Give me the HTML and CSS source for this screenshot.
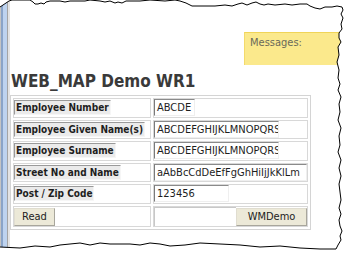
FILE: index.html
```html
<!DOCTYPE html>
<html>
<head>
<meta charset="utf-8">
<link rel="stylesheet" href="styles.css">
</head>
<body>
<div class="page">
  <div class="strip"></div>
  <div class="main">
    <div class="messages">Messages:</div>
    <h1 class="title">WEB_MAP Demo WR1</h1>
    <table class="form">
      <tr>
        <td class="lab"><span class="label">Employee Number</span></td>
        <td class="val"><span class="field short">ABCDE</span></td>
      </tr>
      <tr>
        <td class="lab"><span class="label">Employee Given Name(s)</span></td>
        <td class="val"><span class="field long">ABCDEFGHIJKLMNOPQRS</span></td>
      </tr>
      <tr>
        <td class="lab"><span class="label">Employee Surname</span></td>
        <td class="val"><span class="field long">ABCDEFGHIJKLMNOPQRS</span></td>
      </tr>
      <tr>
        <td class="lab"><span class="label">Street No and Name</span></td>
        <td class="val"><span class="field full">aAbBcCdDeEfFgGhHiIjJkKlLm</span></td>
      </tr>
      <tr>
        <td class="lab"><span class="label">Post / Zip Code</span></td>
        <td class="val"><span class="field mid">123456</span></td>
      </tr>
      <tr class="last">
        <td class="lab"><span class="btn">Read</span></td>
        <td class="val"><div class="btnrow"><span class="blank"></span><span class="btn wide">WMDemo</span></div></td>
      </tr>
    </table>
  </div>
</div>
<svg class="torn" width="357" height="262" viewBox="0 0 357 262">
  <path class="cut" fill-rule="evenodd" d="M0 0H357V262H0Z M0 7 L3 5 L6 3 L9 1 L12 0 L30 0 L33 2 L35 4 L38 4 L41 3 L44 4 L46 2 L50 1 L60 1 L65 2 L70 1 L85 1 L90 0 L100 1 L105 2 L110 1 L115 3 L118 2 L122 3 L126 1 L140 1 L150 0 L165 1 L175 0 L180 1 L186 3 L192 6 L205 6 L215 6 L225 5 L232 6 L238 4 L242 3 L247 5 L252 3 L256 2 L260 4 L264 5 L268 4 L275 5 L285 4 L292 5 L300 4 L307 4 L310 6 L315 8 L320 9 L325 7 L332 7 L337 6 L342 7 L343 10 L341 14 L343 18 L341 24 L342 29 L339 33 L339 38 L341 42 L338 47 L339 55 L337 62 L339 70 L338 78 L340 84 L338 90 L341 97 L339 104 L340 112 L338 120 L341 128 L339 136 L340 145 L338 152 L341 160 L339 168 L341 176 L339 184 L340 192 L341 200 L339 208 L341 214 L339 220 L340 226 L342 231 L340 236 L341 240 L338 245 L336 249 L320 249 L300 248 L280 246 L260 247 L240 245 L220 244 L200 243 L185 245 L170 246 L160 244 L150 243 L140 245 L130 244 L110 244 L100 243 L90 245 L80 243 L70 244 L60 245 L50 247 L35 246 L20 248 L0 247 Z"/>
  <path class="edge" d="M0 7 L3 5 L6 3 L9 1 L12 0 L30 0 L33 2 L35 4 L38 4 L41 3 L44 4 L46 2 L50 1 L60 1 L65 2 L70 1 L85 1 L90 0 L100 1 L105 2 L110 1 L115 3 L118 2 L122 3 L126 1 L140 1 L150 0 L165 1 L175 0 L180 1 L186 3 L192 6 L205 6 L215 6 L225 5 L232 6 L238 4 L242 3 L247 5 L252 3 L256 2 L260 4 L264 5 L268 4 L275 5 L285 4 L292 5 L300 4 L307 4 L310 6 L315 8 L320 9 L325 7 L332 7 L337 6 L342 7 L343 10 L341 14 L343 18 L341 24 L342 29 L339 33 L339 38 L341 42 L338 47 L339 55 L337 62 L339 70 L338 78 L340 84 L338 90 L341 97 L339 104 L340 112 L338 120 L341 128 L339 136 L340 145 L338 152 L341 160 L339 168 L341 176 L339 184 L340 192 L341 200 L339 208 L341 214 L339 220 L340 226 L342 231 L340 236 L341 240 L338 245 L336 249 L320 249 L300 248 L280 246 L260 247 L240 245 L220 244 L200 243 L185 245 L170 246 L160 244 L150 243 L140 245 L130 244 L110 244 L100 243 L90 245 L80 243 L70 244 L60 245 L50 247 L35 246 L20 248 L0 247"/>
</svg>
</body>
</html>
```
FILE: styles.css
```css
html, body {
  margin: 0;
  padding: 0;
  background: #fff;
}
body {
  width: 357px;
  height: 262px;
  overflow: hidden;
  position: relative;
  font-family: "DejaVu Sans", sans-serif;
  font-stretch: condensed;
}
.page {
  display: flex;
  height: 262px;
}
.strip {
  width: 10px;
  flex: none;
  background: linear-gradient(to right, #c4c4c4 0 1px, #8aa4c8 1px 3px, #bed3ef 3px 7px, #a4a4a4 7px 8px, #e3e3e3 8px 10px);
}
.main {
  flex: 1;
  padding-top: 32px;
}
.messages {
  margin-left: 234px;
  height: 33px;
  box-sizing: border-box;
  background: #fbe98c;
  border-top: 1px solid #f0d458;
  border-left: 1px solid #f3da6c;
  padding: 3px 0 0 5px;
  font-size: 11px;
  color: #6a6a5a;
}
.title {
  margin: 5px 0 0 1px;
  font-size: 17px;
  font-weight: bold;
  color: #3a3a3a;
  line-height: 22px;
}
.form {
  margin: 3px 0 0 0;
  border: 1px solid #d4d4d4;
  border-spacing: 2px;
  width: 301px;
  table-layout: fixed;
}
.form td {
  border: 1px solid #d8d8d8;
  padding: 0;
  height: 19.5px;
  box-sizing: border-box;
  line-height: 0;
  vertical-align: top;
}
.form .lab {
  width: 138px;
}
.label {
  display: inline-block;
  margin-top: 1px;
  background: #ebebeb;
  border-top: 1px solid #9a9a9a;
  border-left: 1px solid #9a9a9a;
  border-right: 1px solid #f6f6f6;
  border-bottom: 1px solid #f6f6f6;
  font-size: 10px;
  font-weight: bold;
  color: #1e1e1e;
  line-height: 13px;
  padding: 0 1px;
  white-space: nowrap;
}
.field {
  display: inline-block;
  box-sizing: border-box;
  height: 17px;
  border-top: 1px solid #8a8a8a;
  border-left: 1px solid #7a7a7a;
  border-right: 1px solid #efefef;
  border-bottom: 1px solid #efefef;
  font-size: 11px;
  color: #1e1e1e;
  line-height: 15px;
  padding: 0 2px;
  overflow: hidden;
  white-space: nowrap;
}
.short { width: 41px; }
.long { width: 125px; }
.full { width: 153px; }
.mid { width: 75px; }
.btnrow {
  display: flex;
  height: 19px;
}
.blank {
  flex: 1;
  border-top: 1px solid #c8c8c8;
  border-left: 1px solid #c8c8c8;
}
.btn {
  display: inline-block;
  box-sizing: border-box;
  height: 18px;
  margin-top: 1px;
  background: #ece9d8;
  border: 1px solid #e0ddd0;
  border-right-color: #a8a69c;
  border-bottom-color: #a8a69c;
  font-size: 11px;
  color: #222;
  line-height: 16px;
  padding: 0 7px;
}
.last td {
  height: 21px;
}
.btnrow .wide {
  width: 71px;
  margin-top: 1px;
  text-align: center;
}
.torn {
  position: absolute;
  left: 0;
  top: 0;
}
.cut {
  fill: #fff;
}
.edge {
  fill: none;
  stroke: #000;
  stroke-width: 1;
}
```
